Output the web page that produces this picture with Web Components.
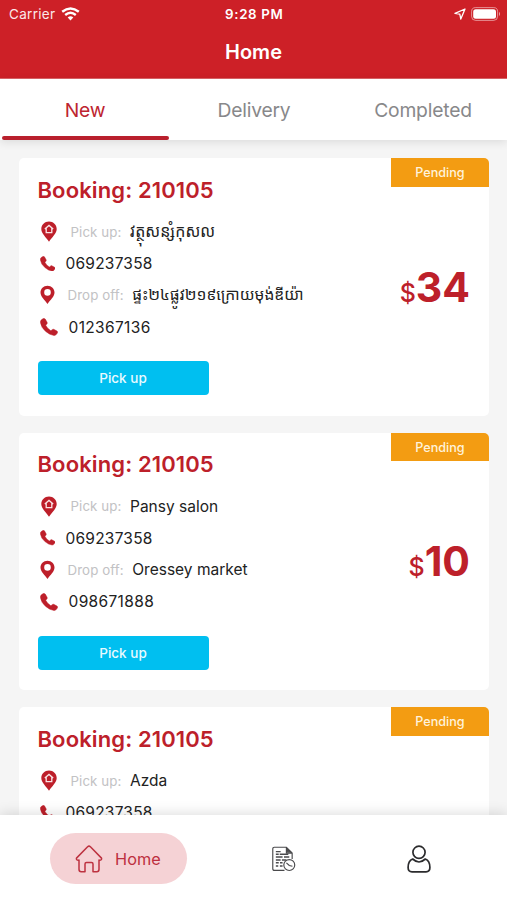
<!DOCTYPE html>
<html lang="en">
<head>
<meta charset="utf-8">
<title>Home</title>
<style>
html,body{margin:0;height:100%;overflow:hidden}
body{font-family:Inter,"Liberation Sans",sans-serif;background:#f5f5f5}
</style>
</head>
<body>
<delivery-app></delivery-app>
<script>
function define(name, html) {
  customElements.define(name, class extends HTMLElement {
    constructor() {
      super();
      this.attachShadow({ mode: 'open' }).innerHTML = html;
    }
  });
}

const icons = {
  wifi: '<svg width="19" height="14" viewBox="0 0 19 14" fill="none" stroke="#fff" stroke-width="2.4"><path d="M1.2 4.8Q9.5-2 17.8 4.8"/><path d="M4.2 8Q9.5 3.5 14.8 8"/><path d="M6.7 10.4Q9.5 8.2 12.3 10.4L9.5 13.4Z" fill="#fff" stroke="none"/></svg>',
  arrow: '<svg width="12" height="12" viewBox="0 0 12 12" fill="none" stroke="#fff" stroke-width="1.3" stroke-linejoin="round"><path d="M11 1L1 5.4L5.8 6.2L6.8 11Z"/></svg>',
  battery: '<svg width="30" height="14" viewBox="0 0 30 14"><rect x=".6" y=".6" width="26" height="12.8" rx="4" fill="none" stroke="#fff" stroke-opacity=".5"/><rect x="2.2" y="2.2" width="22.8" height="9.6" rx="2.5" fill="#fff"/><path d="M28 4.8Q30 7 28 9.2Z" fill="#fff" fill-opacity=".6"/></svg>',
  homepin: '<svg width="16" height="21" viewBox="0 0 16 21"><path d="M8 .4C3.7.4.3 3.7.3 8C.3 12.4 5 16.3 8 20.7C11 16.3 15.7 12.4 15.7 8C15.7 3.7 12.3.4 8 .4Z" fill="#bd1f2a"/><path d="M3.8 8L8 4.4L12.2 8M5.2 7.2V11.6H10.8V7.2" fill="none" stroke="#fbe4e6" stroke-width="1.3"/></svg>',
  pin: '<svg width="15" height="20" viewBox="0 0 15 20"><path fill-rule="evenodd" d="M7.5.7C3.4.7.5 3.7.5 7.5C.5 11.7 4.8 15 7.5 19C10.2 15 14.5 11.7 14.5 7.5C14.5 3.7 11.6.7 7.5.7ZM7.5 4.1A3.3 3.3 0 1 1 7.5 10.7A3.3 3.3 0 1 1 7.5 4.1Z" fill="#bd1f2a"/></svg>',
  phone: '<svg viewBox="0 0 18 18"><path d="M3.2.6L1.1 2.1Q.2 3 .5 4.8Q1.3 9.8 5.7 13.4Q9.8 17 14 17.5Q15.8 17.6 16.8 15.8L17.5 14.7Q17.9 13.7 17 13.1L13.7 11.3Q12.8 10.9 12.1 11.8L10.9 12.8Q7.4 10.9 5.7 7.2L6.9 6Q7.5 5.2 7.1 4.3L5.2 1Q4.4 0 3.2.6Z" fill="#bd1f2a" stroke="#bd1f2a" stroke-width=".5"/></svg>',
  home: '<svg width="28" height="28" viewBox="0 0 28 28" fill="none" stroke="#bd3240" stroke-width="1.5" stroke-linecap="round" stroke-linejoin="round"><path d="M1.5 13.1L12.6 1.8Q14 .5 15.4 1.8L26.5 13.1Q27.2 15.4 24 15.1V24.2Q24 26.7 21.8 26.7H18V19.1Q18 17.5 16.5 17.5H11.5Q10 17.5 10 19.1V26.7H6.2Q4 26.7 4 24.2V15.1Q.8 15.4 1.5 13.1Z"/></svg>',
  orders: '<svg width="24" height="26" viewBox="0 0 25 26" fill="none" stroke="#4a4a4c" stroke-width="1.2"><path d="M13 24.9H2.5Q.8 24.9.8 23.2V2.5Q.8.8 2.5.8H15L21 7V13M15 .8V7H21"/><path d="M16 2.3V6H20Z" fill="#555"/><path d="M4 5.3H9M4 8H7M8 8H17M4 11H11M12.5 11H18M4 14H9M10.3 14H15M4 17H7M8.3 17H11M4 20.3H6.5M8.2 20.3H11" stroke-width="1.5"/><circle cx="18" cy="19.3" r="5.7" fill="#fff"/><path d="M15 17L18 19.7L21.3 20.6"/></svg>',
  user: '<svg width="24" height="28" viewBox="0 0 24 28" fill="none" stroke="#2b2b2d" stroke-width="1.7"><circle cx="12" cy="7.3" r="6.1"/><path d="M5.7 14Q9 17 12 17Q15 17 18.3 14Q22.9 15.7 22.9 22.5Q22.9 26.8 19 26.8H5Q1.1 26.8 1.1 22.5Q1.1 15.7 5.7 14Z" stroke-linejoin="round"/></svg>'
};
customElements.define('app-icon', class extends HTMLElement {
  connectedCallback() {
    if (!this.shadowRoot) this.attachShadow({ mode: 'open' });
    const size = this.getAttribute('size');
    this.shadowRoot.innerHTML = `<style>:host{display:block;flex:none}svg{display:block;${size ? `width:${size}px;height:${size}px` : ''}}</style>` + icons[this.getAttribute('name')];
  }
});

define('status-bar', `<style>
:host{display:grid;grid-template-columns:1fr auto 1fr;height:27px;align-items:center;color:#fff;font-size:13.5px;padding:0 6px 0 9px}
.left,.right{display:flex;align-items:center}.left{gap:6px;letter-spacing:.3px;color:#fbe8e9}.right{justify-content:flex-end;gap:5px}
.time{font-weight:600;letter-spacing:.65px;padding-right:1.5px;font-size:13.3px}
</style><div class="left"><span>Carrier</span><app-icon name="wifi"></app-icon></div><span class="time">9:28 PM</span><div class="right"><app-icon name="arrow"></app-icon><app-icon name="battery"></app-icon></div>`);

define('nav-header', `<style>
:host{display:block;height:79px;background:#cd2027;box-sizing:border-box;border-bottom:1px solid #dc6468;flex:none}
.title{height:50px;display:flex;align-items:center;justify-content:center;color:#fff;font-weight:600;font-size:20px;letter-spacing:0}
</style><status-bar></status-bar><div class="title"><slot></slot></div>`);

define('top-tab', `<style>
:host{display:flex;flex-direction:column;align-items:center;height:61px;color:#88888a;font-size:19.3px;letter-spacing:-.2px}
.label{flex:1;display:flex;align-items:center;padding:5px 0 0 1px}
.line{height:4px;width:167px;border-radius:2px;margin-left:1px}
:host([active]){color:#bd2430}:host([active]) .line{background:#b9202d}
</style><div class="label"><slot></slot></div><div class="line"></div>`);
define('top-tabs', `<style>
:host{display:grid;grid-template-columns:repeat(3,1fr);background:#fff;box-shadow:0 2px 9px #0000001c;z-index:1;flex:none;height:61px}
</style><slot></slot>`);

define('info-row', `<style>
:host{display:flex;align-items:center;height:31.8px;color:#222;font-size:15.5px;white-space:nowrap}
::slotted([slot=label]){color:#c2c2c4;font-size:13.3px;letter-spacing:.1px;margin-right:8.5px}
slot[name=icon]{display:block;width:var(--icon-col,31px);flex:none}
</style><slot name="icon"></slot><slot name="label"></slot><slot></slot>`);

define('action-button', `<style>
:host{display:block;width:171px;height:34px}
button{all:unset;display:flex;width:100%;height:100%;align-items:center;justify-content:center;background:#00bff0;border-radius:4px;color:#e8faff;font-size:13.5px;font-weight:500}
</style><button><slot></slot></button>`);

define('status-badge', `<style>
:host{display:flex;width:98px;height:28.5px;align-items:center;justify-content:center;background:#f39c12;color:#fff3dc;font-size:12.6px;font-weight:500;border-radius:0 5px 0 0;letter-spacing:0;box-sizing:border-box;padding:1px 0 0 0}
</style><slot></slot>`);

define('price-tag', `<style>
:host{display:flex;align-items:baseline;justify-content:flex-end;color:#bd202a;font-weight:700;font-size:41px;line-height:1}
span{font-size:25px;font-weight:500;margin-right:0}
</style><span>$</span><slot></slot>`);

customElements.define('booking-card', class extends HTMLElement {
  connectedCallback() {
    const a = n => this.getAttribute(n);
    const dropOff = a('to') ? `<info-row class="c"><app-icon slot="icon" name="pin"></app-icon><span slot="label">Drop off:</span><span class="to">${a('to')}</span></info-row>
<info-row class="d"><app-icon slot="icon" name="phone" size="18"></app-icon><span>${a('to-phone')}</span></info-row>` : '';
    this.attachShadow({ mode: 'open' }).innerHTML = `<style>
:host{display:grid;grid-template-columns:1fr 98px;height:257.5px;background:#fff;border-radius:5px;flex:none}
.details{padding:17.5px 0 0 18.5px;min-width:0}
h2{margin:0 0 12.5px;height:28px;line-height:28px;color:#bd202a;font-size:22px;font-weight:600;white-space:nowrap;letter-spacing:.12px}
.a{--icon-col:30px;padding-left:1px}.b{--icon-col:26px;letter-spacing:.22px}.c{--icon-col:28px}.d{--icon-col:29px;letter-spacing:.35px}
.rows{padding-left:2px}
action-button{margin-top:18px}
.side{display:flex;flex-direction:column}
price-tag{margin:80px 19px 0 -30px}
.khmer{font-size:16px;font-family:"Noto Sans Khmer","Khmer OS",Inter,sans-serif;padding-bottom:2px}
.to.khmer{font-size:15.6px}
</style><div class="details"><h2>Booking: 210105</h2><div class="rows">
<info-row class="a"><app-icon slot="icon" name="homepin"></app-icon><span slot="label">Pick up:</span><span class="from">${a('from')}</span></info-row>
<info-row class="b"><app-icon slot="icon" name="phone" size="15.5"></app-icon><span>${a('from-phone')}</span></info-row>
${dropOff}
</div>${dropOff ? '<action-button>Pick up</action-button>' : ''}</div>
<div class="side"><status-badge>Pending</status-badge>${a('price') ? `<price-tag>${a('price')}</price-tag>` : ''}</div>`;
    if (this.lang === 'km') this.shadowRoot.querySelectorAll('.from,.to').forEach(e => e.classList.add('khmer'));
  }
});

define('bottom-bar', `<style>
:host{display:grid;height:85px;background:#fff;box-shadow:0 -2px 12px #00000020;z-index:1;flex:none;padding:0 49px;box-sizing:border-box;grid-template-columns:138px 1fr 1fr;align-items:start}
.item{height:51px;margin-top:18px;display:flex;align-items:center;justify-content:center}
.home{background:#f5d2d5;border-radius:26px;gap:12px;color:#bd2f3e;font-size:16.3px;letter-spacing:.05px;box-sizing:border-box;padding-right:1px;margin-left:1px}
.orders{padding-left:59px}.user{padding-left:57px}
</style><div class="item home"><app-icon name="home"></app-icon><span>Home</span></div><div class="item orders"><app-icon name="orders"></app-icon></div><div class="item user"><app-icon name="user"></app-icon></div>`);

define('delivery-app', `<style>
:host{display:flex;flex-direction:column;width:507px;height:900px;overflow:hidden;background:#f5f5f5}
main{flex:1;min-height:0;overflow:hidden;padding:18px 18px 0 19px;display:flex;flex-direction:column;gap:17px}
</style><nav-header>Home</nav-header>
<top-tabs><top-tab active>New</top-tab><top-tab>Delivery</top-tab><top-tab>Completed</top-tab></top-tabs>
<main>
<booking-card lang="km" from="វត្ថុសន្សំកុសល" from-phone="069237358" to="ផ្ទះ២៤ផ្លូវ២១៩ក្រោយមុង់ឌីយ៉ា" to-phone="012367136" price="34"></booking-card>
<booking-card from="Pansy salon" from-phone="069237358" to="Oressey market" to-phone="098671888" price="10"></booking-card>
<booking-card from="Azda" from-phone="069237358"></booking-card>
</main><bottom-bar></bottom-bar>`);
</script>
</body>
</html>
